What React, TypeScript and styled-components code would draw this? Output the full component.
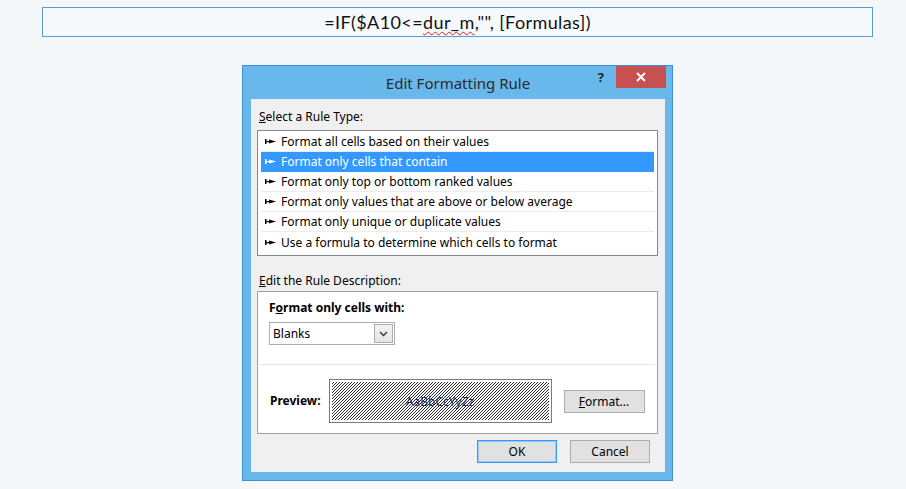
import React from "react";
import styled, { createGlobalStyle } from "styled-components";

const GlobalStyle = createGlobalStyle`
	html, body {
		margin: 0;
		padding: 0;
		background-color: #f4f8fb;
	}
	body {
		font-family: "Noto Sans", "Open Sans", sans-serif;
		width: 906px;
		height: 489px;
		overflow: hidden;
	}
`;

const rules = [
	"Format all cells based on their values",
	"Format only cells that contain",
	"Format only top or bottom ranked values",
	"Format only values that are above or below average",
	"Format only unique or duplicate values",
	"Use a formula to determine which cells to format",
];

const Arrow = ({ color }: { color: string }) => (
	<svg width="11" height="7" viewBox="0 0 11 7">
		<rect x="0" y="1" width="1.5" height="5" fill={color} />
		<rect x="0" y="3" width="6" height="1.2" fill={color} />
		<polygon points="4,1.5 11,3.6 4,5.5" fill={color} />
	</svg>
);

const App = () => {
	return (
		<Page>
			<GlobalStyle />
			<FormulaBar>
				=IF($A10&lt;=<Squiggle>dur_m</Squiggle>,"", [Formulas])
			</FormulaBar>

			<Dialog>
				<TitleBar>
					<Title>Edit Formatting Rule</Title>
					<Help>?</Help>
					<Close>
						<svg width="10" height="10" viewBox="0 0 10 10">
							<path d="M1 1 L9 9 M9 1 L1 9" stroke="#fff" strokeWidth="2" />
						</svg>
					</Close>
				</TitleBar>

				<Client>
					<Label>
						<u>S</u>elect a Rule Type:
					</Label>
					<RuleList>
						{rules.map((r, i) => (
							<RuleRow key={r} selected={i === 1}>
								<Arrow color={i === 1 ? "#ffffff" : "#000000"} />
								<span>{r}</span>
							</RuleRow>
						))}
					</RuleList>

					<Label2>
						<u>E</u>dit the Rule Description:
					</Label2>
					<DescBox>
						<DescTop>
							<BoldLabel>
								F<u>o</u>rmat only cells with:
							</BoldLabel>
							<Select>
								<span>Blanks</span>
								<DropBtn>
									<svg width="9" height="6" viewBox="0 0 9 6">
										<path d="M1 1 L4.5 4.5 L8 1" stroke="#333" strokeWidth="1.4" fill="none" />
									</svg>
								</DropBtn>
							</Select>
						</DescTop>
						<Divider />
						<PreviewRow>
							<BoldLabel>Preview:</BoldLabel>
							<PreviewBox>
								<PreviewText>AaBbCcYyZz</PreviewText>
							</PreviewBox>
							<Button wd="81px">
								<u>F</u>ormat...
							</Button>
						</PreviewRow>
					</DescBox>

					<Footer>
						<Button wd="80px" primary>
							OK
						</Button>
						<Button wd="80px">Cancel</Button>
					</Footer>
				</Client>
			</Dialog>
		</Page>
	);
};

export default App;

const Page = styled.div`
	width: 906px;
	height: 489px;
	padding-top: 7px;
	box-sizing: border-box;
	display: flex;
	flex-direction: column;
`;

const FormulaBar = styled.div`
	margin-left: 42px;
	width: 831px;
	height: 30px;
	box-sizing: border-box;
	border: 1px solid #5b9bd5;
	background-color: #f6f9fc;
	display: flex;
	align-items: center;
	justify-content: center;
	font-family: Lato, "Noto Sans", sans-serif;
	font-size: 18px;
	letter-spacing: 0.4px;
	color: #111;
	white-space: pre;
`;

const Squiggle = styled.span`
	text-decoration: underline wavy #e02020;
	text-decoration-thickness: 1px;
	text-underline-offset: 2px;
`;

const Dialog = styled.div`
	margin-top: 28px;
	margin-left: 242px;
	width: 431px;
	height: 416px;
	box-sizing: border-box;
	border: 1px solid #3f8fd0;
	background-color: #69b8ec;
	display: flex;
	flex-direction: column;
	padding: 0 7px 8px 8px;
`;

const TitleBar = styled.div`
	height: 33px;
	position: relative;
	display: flex;
	align-items: center;
	justify-content: center;
`;

const Title = styled.div`
	font-family: "Noto Sans", sans-serif;
	font-size: 15px;
	color: #2b2b2b;
`;

const Help = styled.div`
	position: absolute;
	right: 61px;
	top: 2px;
	font-family: "Noto Sans", sans-serif;
	font-weight: bold;
	font-size: 13px;
	color: #222;
`;

const Close = styled.div`
	position: absolute;
	right: -1px;
	top: 0;
	width: 50px;
	height: 22px;
	background-color: #c75050;
	display: flex;
	align-items: center;
	justify-content: center;
`;

const Client = styled.div`
	flex: 1;
	background-color: #f0f0f0;
	padding: 10px 7px 0 6px;
	display: flex;
	flex-direction: column;
	font-size: 12px;
	color: #000;
`;

const Label = styled.div`
	height: 16px;
	line-height: 16px;
	margin-left: 2px;
	margin-bottom: 5px;
`;

const Label2 = styled(Label)`
	margin-top: 17px;
	margin-bottom: 2px;
`;

const RuleList = styled.div`
	background-color: #fff;
	border: 1px solid #828790;
	padding: 1px 3px 3px 3px;
	display: flex;
	flex-direction: column;
`;

const RuleRow = styled.div<{ selected?: boolean }>`
	height: 20px;
	box-sizing: border-box;
	display: flex;
	align-items: center;
	gap: 5px;
	padding-left: 4px;
	border-bottom: 1px solid ${(p) => (p.selected ? "#3399ff" : "#ececec")};
	background-color: ${(p) => (p.selected ? "#3399ff" : "transparent")};
	color: ${(p) => (p.selected ? "#fff" : "#000")};

	&:last-child {
		border-bottom: none;
	}
`;

const DescBox = styled.div`
	height: 143px;
	box-sizing: border-box;
	background-color: #fff;
	border: 1px solid #a0a0a0;
	padding: 0 2px;
	display: flex;
	flex-direction: column;
`;

const DescTop = styled.div`
	padding: 8px 0 0 9px;
	height: 72px;
	box-sizing: border-box;
	display: flex;
	flex-direction: column;
	align-items: flex-start;
`;

const BoldLabel = styled.div`
	font-weight: bold;
	height: 16px;
	line-height: 16px;
`;

const Select = styled.div`
	margin-top: 6px;
	width: 126px;
	height: 23px;
	box-sizing: border-box;
	border: 1px solid #abadb3;
	background-color: #fff;
	display: flex;
	align-items: center;
	justify-content: space-between;
	padding: 0 1px 0 3px;
`;

const DropBtn = styled.div`
	width: 19px;
	height: 19px;
	box-sizing: border-box;
	border: 1px solid #acacac;
	background: linear-gradient(#f2f2f2, #e5e5e5);
	display: flex;
	align-items: center;
	justify-content: center;
`;

const Divider = styled.div`
	height: 1px;
	background-color: #e3e3e3;
`;

const PreviewRow = styled.div`
	flex: 1;
	display: flex;
	align-items: center;
	padding: 10px 0 6px 10px;
`;

const PreviewBox = styled.div`
	margin-left: 8px;
	width: 223px;
	height: 44px;
	box-sizing: border-box;
	border: 1px solid #7a7a7a;
	background-color: #fff;
	background-image: repeating-linear-gradient(
		-45deg,
		#ffffff 0px,
		#ffffff 1.3px,
		#2a2a2a 1.3px,
		#2a2a2a 2.12px
	);
	box-shadow: inset 0 0 0 2px #fff;
	display: flex;
	align-items: center;
	justify-content: center;
`;

const PreviewText = styled.span`
	font-family: "Noto Sans", sans-serif;
	font-size: 12px;
	color: #1e2a55;
`;

const Button = styled.div<{ wd: string; primary?: boolean }>`
	width: ${(p) => p.wd};
	height: 23px;
	box-sizing: border-box;
	margin-left: 12px;
	border: 1px solid ${(p) => (p.primary ? "#3399ff" : "#adadad")};
	box-shadow: ${(p) => (p.primary ? "inset 0 0 0 1px #9ccaf5" : "none")};
	background-color: #e1e1e1;
	display: flex;
	align-items: center;
	justify-content: center;
	color: #000;
`;

const Footer = styled.div`
	display: flex;
	justify-content: flex-end;
	margin-top: 6px;
	padding-right: 8px;

	& > div + div {
		margin-left: 13px;
	}
`;
